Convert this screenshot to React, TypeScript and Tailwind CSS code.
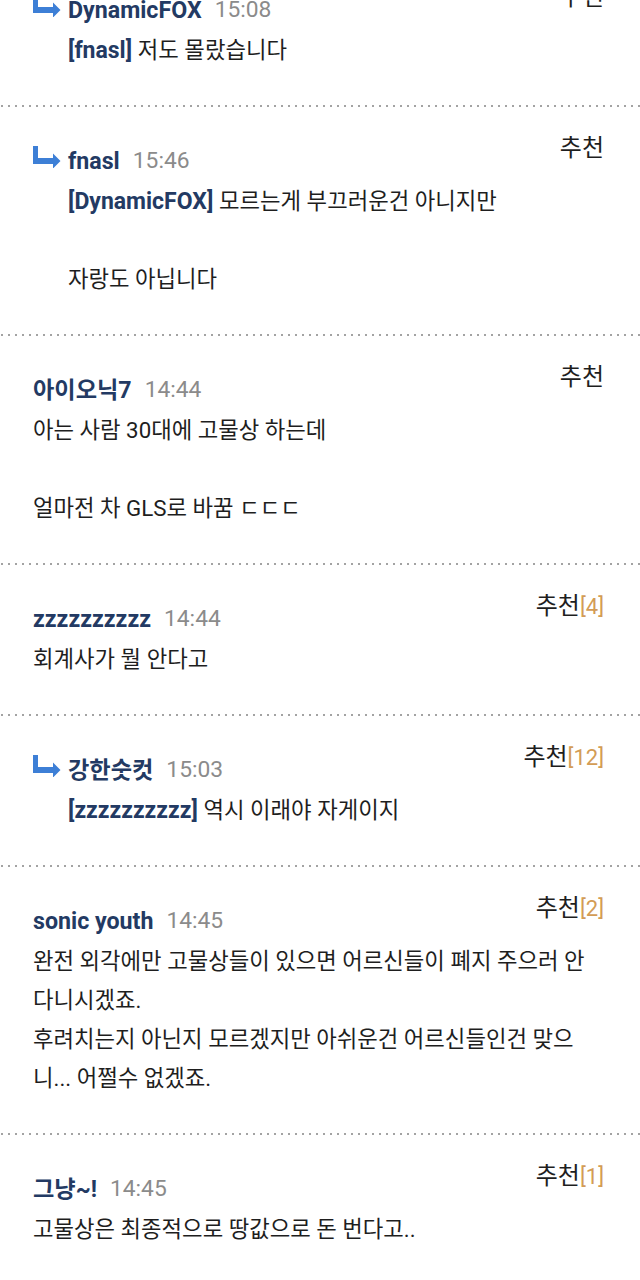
import React from "react";

type Comment = {
  reply?: boolean;
  name: string;
  time: string;
  mention?: string;
  lines: string[];
  count?: number;
};

const comments: Comment[] = [
  { reply: true, name: "DynamicFOX", time: "15:08", mention: "fnasl", lines: ["저도 몰랐습니다"] },
  {
    reply: true,
    name: "fnasl",
    time: "15:46",
    mention: "DynamicFOX",
    lines: ["모르는게 부끄러운건 아니지만", "", "자랑도 아닙니다"],
  },
  { name: "아이오닉7", time: "14:44", lines: ["아는 사람 30대에 고물상 하는데", "", "얼마전 차 GLS로 바꿈 ㄷㄷㄷ"] },
  { name: "zzzzzzzzzz", time: "14:44", lines: ["회계사가 뭘 안다고"], count: 4 },
  { reply: true, name: "강한숫컷", time: "15:03", mention: "zzzzzzzzzz", lines: ["역시 이래야 자게이지"], count: 12 },
  {
    name: "sonic youth",
    time: "14:45",
    lines: [
      "완전 외각에만 고물상들이 있으면 어르신들이 폐지 주으러 안",
      "다니시겠죠.",
      "후려치는지 아닌지 모르겠지만 아쉬운건 어르신들인건 맞으",
      "니... 어쩔수 없겠죠.",
    ],
    count: 2,
  },
  { name: "그냥~!", time: "14:45", lines: ["고물상은 최종적으로 땅값으로 돈 번다고.."], count: 1 },
];

function ReplyArrow() {
  return (
    <svg width="28" height="22" viewBox="0 0 28 22" className="block shrink-0">
      <path d="M0 0 H5 V12 H20 V7.5 L27.5 15 L20 22.5 V18 H0 Z" fill="#3d7fd6" />
    </svg>
  );
}

function Separator() {
  return (
    <svg width="640" height="2" className="block">
      <line x1="1" y1="1" x2="640" y2="1" stroke="#a3a3a3" strokeWidth="2" strokeDasharray="2 5" />
    </svg>
  );
}

function CommentItem({ c }: { c: Comment }) {
  const indent = c.reply ? "pl-[68px]" : "pl-[33px]";
  return (
    <div className="pt-[26px] pb-[35px] pr-[36px]">
      <div className="flex items-start justify-between">
        <div className="mt-[13px] flex h-[30px] items-center pl-[33px]">
          {c.reply && (
            <div className="mr-[7px] self-start">
              <ReplyArrow />
            </div>
          )}
          <span className="text-[23.2px] font-bold leading-[30px] text-[#233a63]">{c.name}</span>
          <span className="ml-[13px] text-[22.8px] leading-[30px] text-[#8b8b8b]">{c.time}</span>
        </div>
        <div className="text-[24px] leading-[30px] text-[#1e1e1e]">
          추천
          {c.count !== undefined && <span className="text-[22px] text-[#d39c55]">[{c.count}]</span>}
        </div>
      </div>
      <div className={`mt-[6px] ${indent} text-[22.3px] leading-[39px] text-[#1e1e1e]`}>
        {c.lines.map((l, i) => (
          <div key={i} className="h-[39px] whitespace-nowrap">
            {i === 0 && c.mention && (
              <span className="text-[23px] font-bold text-[#233a63]">[{c.mention}] </span>
            )}
            {l}
          </div>
        ))}
      </div>
    </div>
  );
}

export default function App() {
  return (
    <div
      className="h-[1280px] w-[640px] overflow-hidden bg-white"
      style={{ fontFamily: 'Roboto, "Noto Sans CJK KR", sans-serif' }}
    >
      <div className="-mt-[44px]">
        {comments.map((c, i) => (
          <React.Fragment key={i}>
            {i > 0 && <Separator />}
            <CommentItem c={c} />
          </React.Fragment>
        ))}
      </div>
    </div>
  );
}
